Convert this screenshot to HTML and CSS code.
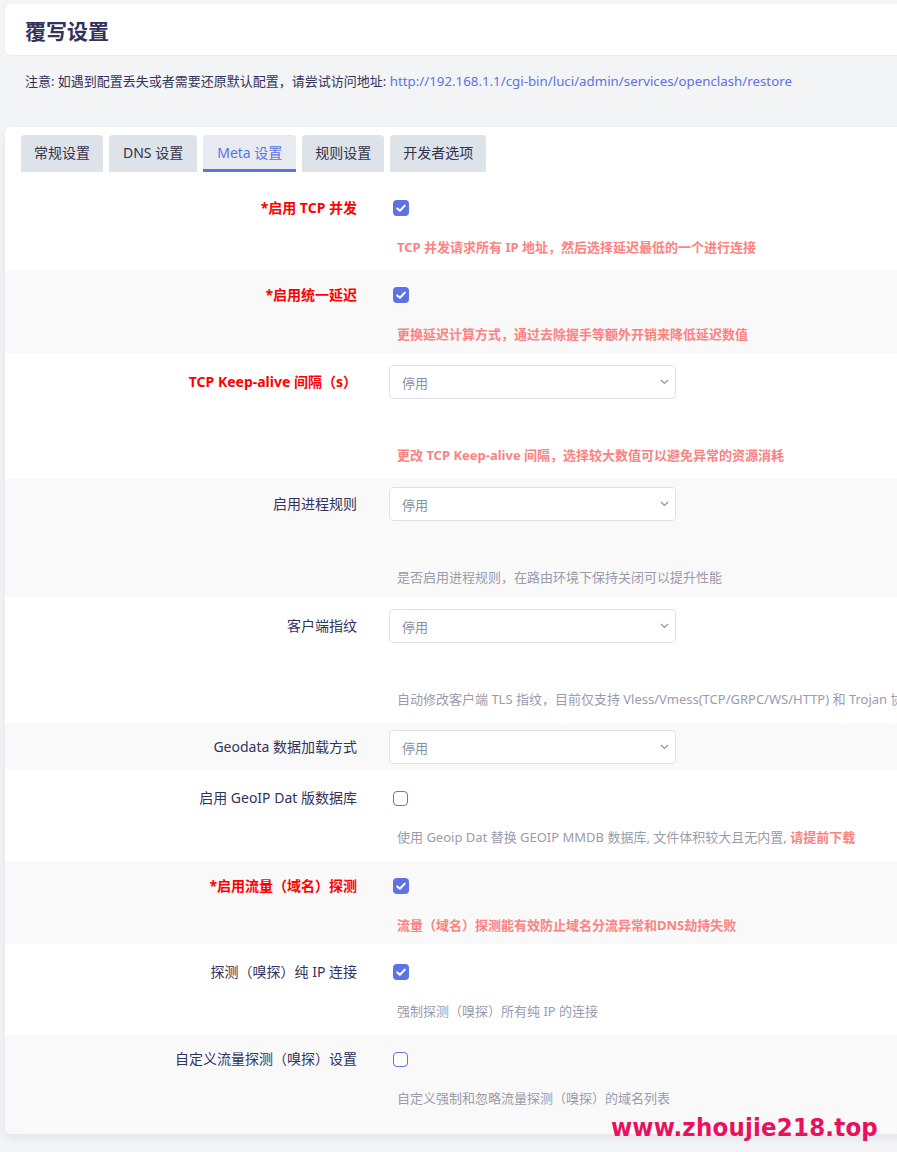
FILE: index.html
```html
<!DOCTYPE html>
<html lang="zh-CN">
<head>
<meta charset="utf-8">
<title>覆写设置</title>
<link rel="stylesheet" href="styles.css">
</head>
<body>
<div class="page">
  <div class="card header-card">
    <h2 class="title">覆写设置</h2>
  </div>
  <div class="notice">注意: 如遇到配置丢失或者需要还原默认配置，请尝试访问地址: <a class="link" href="#">http://192.168.1.1/cgi-bin/luci/admin/services/openclash/restore</a></div>

  <div class="card content-card">
    <ul class="tabs">
      <li class="tab">常规设置</li>
      <li class="tab latin">DNS 设置</li>
      <li class="tab latin active">Meta 设置</li>
      <li class="tab">规则设置</li>
      <li class="tab">开发者选项</li>
    </ul>

    <div class="rows">
      <div class="row cb-row first">
        <div class="label red">*启用 TCP 并发</div>
        <div class="field">
          <div class="ctl"><span class="cb checked"><svg viewBox="0 0 16 16" width="16" height="16"><path d="M4.3 8.4 L6.9 10.8 L11.8 5.6" fill="none" stroke="#fff" stroke-width="2" stroke-linecap="round" stroke-linejoin="round"/></svg></span></div>
          <div class="desc warn">TCP 并发请求所有 IP 地址，然后选择延迟最低的一个进行连接</div>
        </div>
      </div>

      <div class="row cb-row alt">
        <div class="label red">*启用统一延迟</div>
        <div class="field">
          <div class="ctl"><span class="cb checked"><svg viewBox="0 0 16 16" width="16" height="16"><path d="M4.3 8.4 L6.9 10.8 L11.8 5.6" fill="none" stroke="#fff" stroke-width="2" stroke-linecap="round" stroke-linejoin="round"/></svg></span></div>
          <div class="desc warn">更换延迟计算方式，通过去除握手等额外开销来降低延迟数值</div>
        </div>
      </div>

      <div class="row sel-row">
        <div class="label red">TCP Keep-alive 间隔（s）</div>
        <div class="field">
          <div class="ctl"><div class="select"><span>停用</span><svg viewBox="0 0 9 6" width="9" height="6"><path d="M1 1 L4.5 4.5 L8 1" fill="none" stroke="#8a94a6" stroke-width="1.2"/></svg></div></div>
          <div class="desc warn">更改 TCP Keep-alive 间隔，选择较大数值可以避免异常的资源消耗</div>
        </div>
      </div>

      <div class="row sel-row tight alt">
        <div class="label">启用进程规则</div>
        <div class="field">
          <div class="ctl"><div class="select"><span>停用</span><svg viewBox="0 0 9 6" width="9" height="6"><path d="M1 1 L4.5 4.5 L8 1" fill="none" stroke="#8a94a6" stroke-width="1.2"/></svg></div></div>
          <div class="desc">是否启用进程规则，在路由环境下保持关闭可以提升性能</div>
        </div>
      </div>

      <div class="row sel-row">
        <div class="label">客户端指纹</div>
        <div class="field">
          <div class="ctl"><div class="select"><span>停用</span><svg viewBox="0 0 9 6" width="9" height="6"><path d="M1 1 L4.5 4.5 L8 1" fill="none" stroke="#8a94a6" stroke-width="1.2"/></svg></div></div>
          <div class="desc">自动修改客户端 TLS 指纹，目前仅支持 Vless/Vmess(TCP/GRPC/WS/HTTP) 和 Trojan 协议</div>
        </div>
      </div>

      <div class="row short-row alt">
        <div class="label">Geodata 数据加载方式</div>
        <div class="field">
          <div class="ctl"><div class="select"><span>停用</span><svg viewBox="0 0 9 6" width="9" height="6"><path d="M1 1 L4.5 4.5 L8 1" fill="none" stroke="#8a94a6" stroke-width="1.2"/></svg></div></div>
        </div>
      </div>

      <div class="row cb-row roomy">
        <div class="label">启用 GeoIP Dat 版数据库</div>
        <div class="field">
          <div class="ctl"><span class="cb"></span></div>
          <div class="desc">使用 Geoip Dat 替换 GEOIP MMDB 数据库, 文件体积较大且无内置, <b class="warn">请提前下载</b></div>
        </div>
      </div>

      <div class="row cb-row alt">
        <div class="label red">*启用流量（域名）探测</div>
        <div class="field">
          <div class="ctl"><span class="cb checked"><svg viewBox="0 0 16 16" width="16" height="16"><path d="M4.3 8.4 L6.9 10.8 L11.8 5.6" fill="none" stroke="#fff" stroke-width="2" stroke-linecap="round" stroke-linejoin="round"/></svg></span></div>
          <div class="desc warn">流量（域名）探测能有效防止域名分流异常和DNS劫持失败</div>
        </div>
      </div>

      <div class="row cb-row roomy">
        <div class="label">探测（嗅探）纯 IP 连接</div>
        <div class="field">
          <div class="ctl"><span class="cb checked"><svg viewBox="0 0 16 16" width="16" height="16"><path d="M4.3 8.4 L6.9 10.8 L11.8 5.6" fill="none" stroke="#fff" stroke-width="2" stroke-linecap="round" stroke-linejoin="round"/></svg></span></div>
          <div class="desc">强制探测（嗅探）所有纯 IP 的连接</div>
        </div>
      </div>

      <div class="row cb-row alt last">
        <div class="label">自定义流量探测（嗅探）设置</div>
        <div class="field">
          <div class="ctl"><span class="cb"></span></div>
          <div class="desc">自定义强制和忽略流量探测（嗅探）的域名列表</div>
        </div>
      </div>
    </div>
  </div>
</div>
<div class="watermark">www.zhoujie218.top</div>
</body>
</html>
```

FILE: styles.css
```css
html, body {
  margin: 0;
  padding: 0;
}
body {
  background: #f3f4f6;
  font-family: "Noto Sans", "Noto Sans CJK SC", sans-serif;
  font-size: 13px;
  color: #32325d;
  overflow: hidden;
  position: relative;
  min-height: 1152px;
}
.page {
  padding: 4px 0 0 5px;
  margin-right: -12px;
}
.card {
  background: #fff;
  border-radius: 6px;
}
.header-card {
  height: 51px;
  display: flex;
  align-items: center;
  padding-left: 20px;
  box-shadow: 0 1px 3px rgba(50, 50, 93, 0.05);
}
.title {
  margin: 0;
  font-size: 21px;
  font-weight: 700;
  color: #32325d;
}
.notice {
  padding: 16px 0 0 20px;
  height: 36px;
  line-height: 20px;
  color: #32325d;
  font-size: 13px;
  white-space: nowrap;
}
.link {
  color: #5e72e4;
  text-decoration: none;
  font-size: 13.3px;
}
.content-card {
  margin-top: 20px;
  padding-top: 8px;
  box-shadow: 0 4px 10px rgba(50, 50, 93, 0.08);
  overflow: hidden;
}
.tabs {
  list-style: none;
  margin: 0;
  padding: 0 0 0 16px;
  display: flex;
  gap: 6px;
}
.tab {
  height: 37px;
  line-height: 36px;
  padding: 0 13px;
  background: #dee3e9;
  border-radius: 4px 4px 0 0;
  color: #32324a;
  font-size: 14px;
  box-sizing: border-box;
}
.tab.latin {
  padding: 0 14px;
}
.tab.active {
  background: #e7eaef;
  color: #5e72e4;
  border-bottom: 3px solid #5e72e4;
}
.rows {
  display: flex;
  flex-direction: column;
}
.row {
  display: flex;
  align-items: flex-start;
  background: #fff;
}
.row.alt {
  background: #f9f9f9;
}
.label {
  width: 352px;
  padding-right: 32px;
  text-align: right;
  height: 34px;
  line-height: 34px;
  flex: none;
  font-size: 14px;
  color: #32325d;
  white-space: nowrap;
}
.label.red {
  color: #ff0000;
  font-weight: 700;
}
.field {
  flex: 1;
  min-width: 0;
}
.ctl {
  height: 34px;
  display: flex;
  align-items: center;
}
.desc {
  padding-left: 8px;
  line-height: 20px;
  color: #9b9bab;
  white-space: nowrap;
}
.warn {
  color: #fb8282;
  font-weight: 700;
}
.cb-row {
  padding: 8px 0 9px;
}
.cb-row .desc {
  margin-top: 12px;
}
.cb-row.first {
  padding-top: 19px;
  padding-bottom: 13px;
}
.cb-row.roomy {
  padding-top: 11px;
  padding-bottom: 14px;
}
.cb-row.last {
  padding-top: 7px;
  padding-bottom: 26px;
}
.sel-row {
  padding: 12px 0 14px;
}
.sel-row.tight {
  padding: 8px 0 10px;
}
.sel-row .desc {
  margin-top: 46px;
}
.short-row {
  padding: 7px 0 6px;
}
.cb {
  width: 15px;
  height: 15px;
  margin-left: 4px;
  border: 1px solid #5e72e4;
  border-radius: 4px;
  background: #fff;
  box-sizing: border-box;
  display: inline-flex;
}
.cb.checked {
  width: 16px;
  height: 16px;
  background: #5e72e4;
  border: none;
}
.select {
  width: 287px;
  height: 34px;
  box-sizing: border-box;
  border: 1px solid #dfe3e9;
  border-radius: 4px;
  background: #fff;
  display: flex;
  align-items: center;
  justify-content: space-between;
  padding: 0 6px 0 12px;
  color: #8492a6;
}
.watermark {
  position: absolute;
  right: 19px;
  top: 1112px;
  font-family: "DejaVu Sans Condensed", "DejaVu Sans", sans-serif;
  font-stretch: condensed;
  font-weight: 700;
  font-size: 25.5px;
  letter-spacing: 0.2px;
  color: #ea1060;
  white-space: nowrap;
}
```
